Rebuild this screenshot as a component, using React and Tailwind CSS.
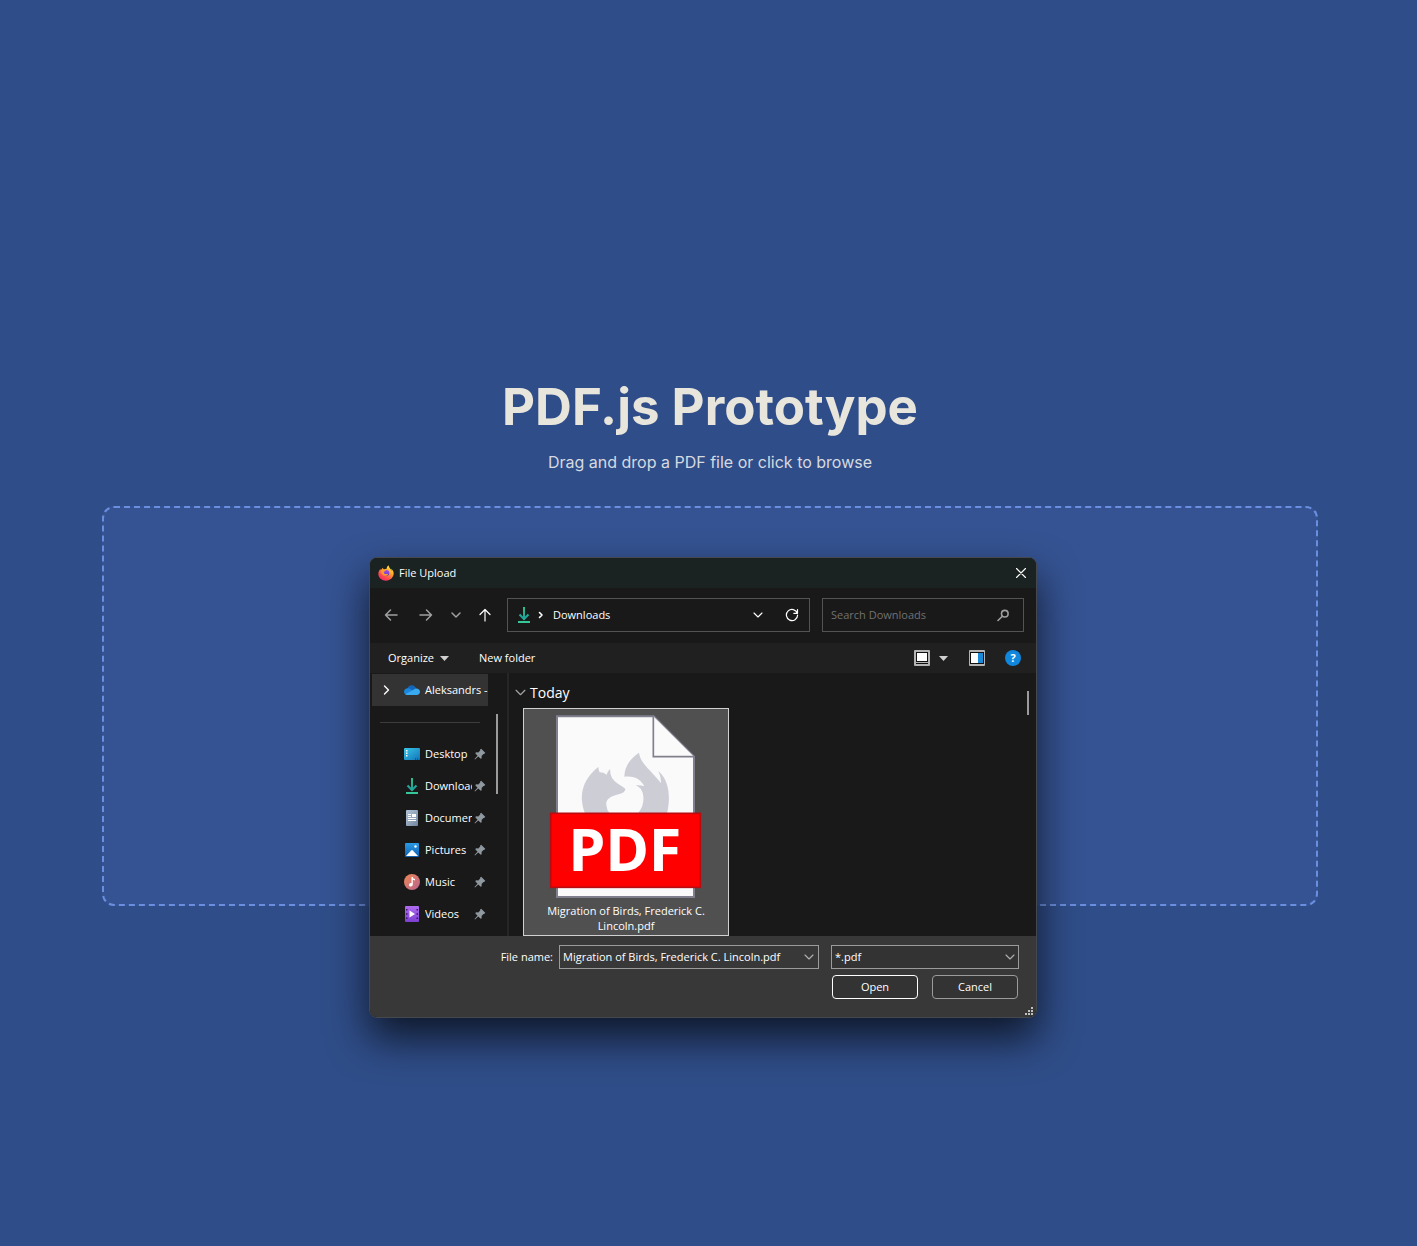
import React from "react";

const stroke = { fill: "none", stroke: "currentColor", strokeLinecap: "round", strokeLinejoin: "round" };

function FirefoxIcon() {
  return (
    <svg viewBox="0 0 48 48" className="size-4 shrink-0" aria-hidden="true">
      <defs>
        <linearGradient id="ffBody" x1="0.8" y1="0.05" x2="0.2" y2="1">
          <stop offset="0" stopColor="#fff04a" />
          <stop offset="0.35" stopColor="#ffa62a" />
          <stop offset="0.7" stopColor="#ff4b4e" />
          <stop offset="1" stopColor="#e8286c" />
        </linearGradient>
        <linearGradient id="ffGlobe" x1="0.5" y1="0" x2="0.5" y2="1">
          <stop offset="0" stopColor="#a94bf0" />
          <stop offset="1" stopColor="#5a3fc4" />
        </linearGradient>
      </defs>
      <path fill="url(#ffBody)" d="M45 18c-1-3-4-6-6-7 2 3 3 6 3 8-2-6-7-9-9-14-1-2-1-3-1-4-4 2-6 7-6 10-3 0-5 1-7 2-3-1-5-3-6-5-1 2-2 4-1 7-2 1-4-1-5-2C4 16 1 21 1 26c0 12 10 21 23 21s23-10 23-22c0-3-1-5-2-7z" />
      <circle cx="25" cy="24" r="9" fill="url(#ffGlobe)" />
      <path fill="#ff9a2c" d="M9 14c4-2 8-1 10 1 2 0 5 0 5 1-1 3-6 3-7 6 0 4 4 6 9 5 3-1 5 1 4 2-3 4-10 5-15 1-5-4-7-10-6-16z" />
    </svg>
  );
}

function DownloadIcon() {
  return (
    <svg viewBox="0 0 16 16" className="size-4 shrink-0" aria-hidden="true">
      <defs>
        <linearGradient id="dlGreen" gradientUnits="userSpaceOnUse" x1="0" y1="0" x2="0" y2="16">
          <stop offset="0" stopColor="#2fbf8c" />
          <stop offset="0.65" stopColor="#1fa39a" />
          <stop offset="1" stopColor="#35cfa0" />
        </linearGradient>
      </defs>
      <path d="M8 0V12M3.500 7.500 8 12l4.500-4.500" fill="none" stroke="url(#dlGreen)" strokeWidth="2" />
      <path d="M2 14h12v2H2z" fill="#35c79a" />
    </svg>
  );
}

function CloudIcon() {
  return (
    <svg viewBox="0 0 16 16" className="size-4 shrink-0" aria-hidden="true">
      <path fill="#1267b8" d="M3.300 6.800C4 4.300 5.900 3.200 7.700 3.200c2.200 0 3.800 1.300 4.500 3.300L8 10z" />
      <path fill="#1a86dc" d="M0 9.800c0-2.200 1.700-3.600 3.700-3.600 1.400 0 2.100.4 3 1L11 10l-7.500 3C1.500 13 0 11.700 0 9.800z" />
      <path fill="#3aaaf0" d="M1.200 12.200 10 7.500c.8-.8 1.500-1 2.400-1 2 0 3.600 1.500 3.600 3.300S14.600 13 12.700 13H3.500c-1 0-1.700-.3-2.300-.8z" />
    </svg>
  );
}

function DesktopIcon() {
  return (
    <svg viewBox="0 0 16 16" className="size-4 shrink-0" aria-hidden="true">
      <defs>
        <linearGradient id="deskBlue" x1="0" y1="0" x2="1" y2="1">
          <stop offset="0" stopColor="#38c6e8" />
          <stop offset="1" stopColor="#1173b8" />
        </linearGradient>
      </defs>
      <rect y="2" width="16" height="12" rx="1" fill="url(#deskBlue)" />
      <path fill="#fff" d="M2 4h1.500v1.500H2zM2 6.500h1.500V8H2zM2 9h1.500v1.500H2z" />
      <path fill="#0b3558" d="M11 12.500h1v1h-1zM13 12.500h1v1h-1z" />
    </svg>
  );
}

function DocumentIcon() {
  return (
    <svg viewBox="0 0 16 16" className="size-4 shrink-0" aria-hidden="true">
      <defs>
        <linearGradient id="docGrey" x1="0" y1="0" x2="1" y2="1">
          <stop offset="0" stopColor="#b3c4d6" />
          <stop offset="1" stopColor="#71879f" />
        </linearGradient>
      </defs>
      <rect x="2" width="12" height="16" rx="1" fill="url(#docGrey)" />
      <path fill="#fff" d="M4 4h3v1H4zM4 6h3v1H4zM8 4h4v3H8zM4 8h8v1H4zM4 10h8v1H4z" />
    </svg>
  );
}

function PicturesIcon() {
  return (
    <svg viewBox="0 0 16 16" className="size-4 shrink-0" aria-hidden="true">
      <defs>
        <linearGradient id="picBlue" x1="0" y1="0" x2="0" y2="1">
          <stop offset="0" stopColor="#2b9be6" />
          <stop offset="1" stopColor="#0f5fb0" />
        </linearGradient>
      </defs>
      <rect x="1" y="1" width="14" height="14" rx="1" fill="url(#picBlue)" />
      <path fill="#fff" d="M2 14l5.200-5.500q.8-.8 1.600 0L14 14z" />
      <circle cx="11.500" cy="4.500" r="1.200" fill="#fff" />
    </svg>
  );
}

function MusicIcon() {
  return (
    <svg viewBox="0 0 16 16" className="size-4 shrink-0" aria-hidden="true">
      <defs>
        <linearGradient id="musOrange" x1="0" y1="0" x2="1" y2="1">
          <stop offset="0" stopColor="#ee8a54" />
          <stop offset="1" stopColor="#b8608f" />
        </linearGradient>
      </defs>
      <circle cx="8" cy="8" r="8" fill="url(#musOrange)" />
      <path fill="#fff" d="M7.500 3h1.200c.2 1.300 1 1.800 2.300 2v1.400c-1 0-1.700-.3-2.200-.8v5c0 1.200-.8 2-1.900 2S5 11.900 5 10.900 5.800 9 6.800 9c.3 0 .5 0 .7.100z" />
    </svg>
  );
}

function VideosIcon() {
  return (
    <svg viewBox="0 0 16 16" className="size-4 shrink-0" aria-hidden="true">
      <defs>
        <linearGradient id="vidPurple" x1="0" y1="0" x2="0" y2="1">
          <stop offset="0" stopColor="#b06cf0" />
          <stop offset="1" stopColor="#7c3fd0" />
        </linearGradient>
      </defs>
      <rect x="1" width="14" height="16" rx="1" fill="url(#vidPurple)" />
      <path fill="#3c1570" d="M2 3h1.500v1.500H2zM2 7.200h1.500v1.500H2zM2 11.500h1.500V13H2zM12.500 3H14v1.500h-1.500zM12.500 7.200H14v1.500h-1.500zM12.500 11.500H14V13h-1.500z" />
      <path fill="#fff" d="M5.500 4.500 11 8l-5.500 3.500z" />
    </svg>
  );
}

function PinIcon() {
  return (
    <svg viewBox="0 0 12 12" className="size-3 shrink-0" aria-hidden="true">
      <path fill="#8f989f" d="M7.200.8 11.200 4.800 10.300 6 9.500 5.900 7.600 8 7.700 10.200 6.700 10.800 4.300 8.500 1 11.600.5 11.100 3.500 7.700 1.300 5.300 2 4.300 4.200 4.400 6.200 2.500 6 1.700z" />
    </svg>
  );
}

function Chevron({ className, weight = 1.1 }) {
  return (
    <svg viewBox="0 0 10 10" className={className} strokeWidth={weight} {...stroke} aria-hidden="true">
      <path d="M1 3l4 4 4-4" />
    </svg>
  );
}

function Caret() {
  return (
    <svg viewBox="0 0 9 5" className="h-[5px] w-[9px]" aria-hidden="true">
      <path d="M0 0h9L4.500 5z" fill="#d0d0d0" />
    </svg>
  );
}

function PdfThumb() {
  return (
    <svg viewBox="87 102 462 555" className="h-[185px] w-[154px]" role="img" aria-label="PDF document">
      <path d="M111 109H401L522 230V651H111z" fill="#fafafb" stroke="#7f7f8e" strokeWidth="6" />
      <path d="M400 109V230H522" fill="#fafafb" stroke="#7f7f8e" strokeWidth="5" />
      <path fill="#cdcdd6" d="M195 400C172 340 194 293 235 261Q235 270 239 277Q252 277 260 284Q263 274 270 267Q270 282 276 294C287 310 303 316 313 324Q319 329 313 334C308 342 296 342 286 346C267 351 257 362 259 374Q260 390 269 400z" />
      <path fill="#cdcdd6" d="M354 400C372 380 376 346 362 326Q356 320 347 316Q360 314 373 319C364 299 344 286 313 290C314 259 331 235 357 218C361 246 382 262 397 280Q409 293 423 309Q424 291 415 273C447 300 453 350 441 400z" />
      <rect x="92" y="400" width="449" height="222" fill="#ff0000" stroke="#b90c10" strokeWidth="5" />
      <text x="315" y="573" textAnchor="middle" fill="#fff" fontFamily="Noto Sans, sans-serif" fontWeight="700" fontSize="178">PDF</text>
    </svg>
  );
}

const places = [
  { name: "Desktop", Icon: DesktopIcon },
  { name: "Downloads", Icon: DownloadIcon },
  { name: "Documents", Icon: DocumentIcon },
  { name: "Pictures", Icon: PicturesIcon },
  { name: "Music", Icon: MusicIcon },
  { name: "Videos", Icon: VideosIcon },
];

function TitleBar() {
  return (
    <header className="flex h-[30px] items-center justify-between bg-[#1b2322] pr-[7px] pl-2">
      <h2 id="dialog-title" className="flex items-center gap-[5px] text-white">
        <FirefoxIcon />
        File Upload
      </h2>
      <button type="button" aria-label="Close" className="flex size-4 items-center justify-center text-white">
        <svg viewBox="0 0 10 10" className="size-[10px]" strokeWidth="1.1" {...stroke}>
          <path d="M.5.5l9 9M9.500.5l-9 9" />
        </svg>
      </button>
    </header>
  );
}

function NavBar() {
  return (
    <div className="flex h-[55px] items-center gap-3 pr-3 pb-[2px] pl-[13px]">
      <nav aria-label="History" className="flex w-28 items-center text-[#a0a0a0]">
        <button type="button" aria-label="Back" className="flex w-4 justify-center">
          <svg viewBox="0 0 14 14" className="size-[14px]" strokeWidth="1.5" {...stroke}><path d="M13 7H1.500M6.500 2l-5 5 5 5" /></svg>
        </button>
        <button type="button" aria-label="Forward" className="ml-[19px] flex w-4 justify-center">
          <svg viewBox="0 0 14 14" className="size-[14px]" strokeWidth="1.5" {...stroke}><path d="M1 7h11.500M7.500 2l5 5-5 5" /></svg>
        </button>
        <button type="button" aria-label="Recent locations" className="ml-4 flex w-3 justify-center">
          <Chevron className="size-[10px]" weight={1.5} />
        </button>
        <button type="button" aria-label="Up" className="ml-[15px] flex w-4 justify-center text-white">
          <svg viewBox="0 0 14 14" className="size-[14px]" strokeWidth="1.2" {...stroke}><path d="M7 13V1.500M2 6.500l5-5 5 5" /></svg>
        </button>
      </nav>
      <div className="flex h-[34px] min-w-0 flex-1 items-center border border-[#535353] pr-[10px] pl-2 text-white">
        <DownloadIcon />
        <svg viewBox="0 0 6 8" className="ml-[6px] h-2 w-[6px]" strokeWidth="1.6" {...stroke} aria-hidden="true"><path d="M1.500 1.500 4 4 1.500 6.500" /></svg>
        <button type="button" className="ml-[9px]">Downloads</button>
        <button type="button" aria-label="Previous locations" className="ml-auto">
          <Chevron className="size-[10px]" />
        </button>
        <button type="button" aria-label="Refresh" className="ml-[22px]">
          <svg viewBox="0 0 14 14" className="size-[14px]" strokeWidth="1.2" {...stroke}>
            <path d="M12.300 5.200A5.600 5.600 0 1 0 12.600 7M12.500 1.500v3.800H8.800" />
          </svg>
        </button>
      </div>
      <label className="flex h-[34px] w-[202px] items-center border border-[#535353] pr-[13px] pl-2">
        <input type="search" aria-label="Search Downloads" placeholder="Search Downloads" className="min-w-0 flex-1 bg-transparent outline-none placeholder:text-[#717171]" />
        <svg viewBox="0 0 14 14" className="size-[14px] text-[#a0a0a0]" strokeWidth="1.6" {...stroke} aria-hidden="true">
          <circle cx="8.800" cy="5.700" r="3.300" /><path d="M6.300 8.200 2 12.500" />
        </svg>
      </label>
    </div>
  );
}

function Toolbar() {
  return (
    <div className="flex h-[30px] items-center bg-[#202020] pr-[15px] pl-[18px] text-white">
      <button type="button" className="flex w-[61px] items-center justify-between">Organize <Caret /></button>
      <button type="button" className="ml-[30px]">New folder</button>
      <button type="button" aria-label="Change view" className="ml-auto">
        <svg viewBox="0 0 16 16" className="size-4">
          <rect width="16" height="16" rx="1" fill="#b4b4b4" />
          <path d="M2 2h12v12H2z" fill="#111" /><path d="M3 3h10v8H3z" fill="#fff" /><path d="M2 12h12v1H2z" fill="#b4b4b4" />
        </svg>
      </button>
      <button type="button" aria-label="More views" className="ml-[9px]"><Caret /></button>
      <button type="button" aria-label="Preview pane" className="ml-[21px]">
        <svg viewBox="0 0 16 16" className="size-4">
          <rect width="16" height="16" rx="1" fill="#b4b4b4" />
          <path d="M1 2h14v12H1z" fill="#111" /><path d="M2 3h7v10H2z" fill="#fff" /><path d="M9 3h5v10H9z" fill="#1b8ad8" />
        </svg>
      </button>
      <button type="button" aria-label="Help" className="ml-5 flex size-4 items-center justify-center rounded-full bg-[#1086dc] font-bold leading-4">?</button>
    </div>
  );
}

function Sidebar() {
  return (
    <nav aria-label="Places" className="flex w-[139px] shrink-0 justify-between border-r-2 border-[#262626] pl-[2px] text-white">
      <div className="w-[116px] pt-px">
        <button type="button" className="flex h-8 w-full items-center overflow-hidden bg-[#333333] pl-[11px] whitespace-nowrap">
          <svg viewBox="0 0 6 10" className="mr-[14px] h-[10px] w-[7px] shrink-0" strokeWidth="1.4" {...stroke} aria-hidden="true"><path d="M1 1l4 4-4 4" /></svg>
          <CloudIcon />
          <span className="ml-[5px]">Aleksandrs -</span>
        </button>
        <hr className="mx-2 mt-4 mb-[15px] border-[#3c3c3c]" />
        <ul>
          {places.map(({ name, Icon }) => (
            <li key={name}>
              <button type="button" className="flex h-8 w-full items-center pl-8 text-left">
                <Icon />
                <span className="mr-[2px] ml-[5px] w-[47px] overflow-hidden whitespace-nowrap">{name}</span>
                <PinIcon />
              </button>
            </li>
          ))}
        </ul>
      </div>
      <div className="mt-[41px] mr-[9px] h-20 w-[2px] bg-[#9b9b9b]" />
    </nav>
  );
}

function FileList() {
  return (
    <section className="flex flex-1 justify-between pr-[7px] pl-[6px]">
      <div className="flex flex-col items-start">
        <button type="button" className="flex h-[35px] items-center gap-1 pt-1 text-sm text-white">
          <Chevron className="size-[11px] text-[#a0a0a0]" />
          Today
        </button>
        <button type="button" className="ml-2 flex h-[228px] w-[206px] flex-col items-center border border-[#d0d0d0] bg-[#505050] pt-[5px] text-white">
          <PdfThumb />
          <span className="mt-1 leading-[15px]">Migration of Birds, Frederick C.<br />Lincoln.pdf</span>
        </button>
      </div>
      <div className="mt-[18px] h-6 w-[2px] bg-[#9b9b9b]" />
    </section>
  );
}

function DialogFooter() {
  return (
    <footer className="flex flex-col items-end gap-[6px] bg-[#383838] pt-[9px] pr-[17px] pb-[18px] text-white">
      <div className="flex items-center">
        <label htmlFor="file-name" className="mr-[6px]">File name:</label>
        <div className="mr-3 flex h-6 w-[260px] items-center border border-[#9b9b9b] pr-1 pl-[3px]">
          <input id="file-name" defaultValue="Migration of Birds, Frederick C. Lincoln.pdf" className="min-w-0 flex-1 bg-transparent outline-none" />
          <Chevron className="size-[10px] shrink-0 text-[#b0b0b0]" />
        </div>
        <div className="relative">
          <select aria-label="File type" className="h-6 w-[188px] appearance-none border border-[#9b9b9b] bg-[#333333] pl-[3px] outline-none">
            <option>*.pdf</option>
          </select>
          <Chevron className="pointer-events-none absolute top-[7px] right-1 size-[10px] text-[#b0b0b0]" />
        </div>
      </div>
      <div className="mr-px flex gap-[14px]">
        <button type="button" className="h-6 w-[86px] rounded border border-white bg-[#333333]">Open</button>
        <button type="button" className="h-6 w-[86px] rounded border border-[#9b9b9b] bg-[#333333]">Cancel</button>
      </div>
      <svg viewBox="0 0 8 8" className="absolute right-[3px] bottom-[2px] size-2" fill="#c0c0c0" aria-hidden="true">
        <path d="M6 0h2v2H6zM3 3h2v2H3zM6 3h2v2H6zM0 6h2v2H0zM3 6h2v2H3zM6 6h2v2H6z" />
      </svg>
    </footer>
  );
}

function FileDialog() {
  return (
    <div
      role="dialog"
      aria-labelledby="dialog-title"
      className="absolute top-[51px] left-[267px] w-[668px] overflow-hidden rounded-lg border border-[#45484d] bg-[#191919] font-['Open_Sans',sans-serif] text-[11px] leading-4 shadow-[0_20px_40px_rgba(0,0,0,0.7)]"
    >
      <TitleBar />
      <NavBar />
      <Toolbar />
      <div className="flex h-[263px]">
        <Sidebar />
        <FileList />
      </div>
      <DialogFooter />
    </div>
  );
}

export default function App() {
  return (
    <main className="flex min-h-screen flex-col items-center justify-center bg-[#2f4d88] pr-[99px] pl-[102px] font-['Inter',sans-serif]">
      <h1 className="mt-[39px] text-[51px] leading-[56px] font-bold text-[#e8e6dc]">PDF.js Prototype</h1>
      <p className="mt-[15px] mb-8 text-base leading-6 text-[#d6dae0]">Drag and drop a PDF file or click to browse</p>
      <div className="relative w-full">
        <button type="button" aria-label="Choose a PDF file" className="block h-[400px] w-full rounded-xl border-2 border-dashed border-[#6a8fe0] bg-[#355392]" />
        <FileDialog />
      </div>
    </main>
  );
}
